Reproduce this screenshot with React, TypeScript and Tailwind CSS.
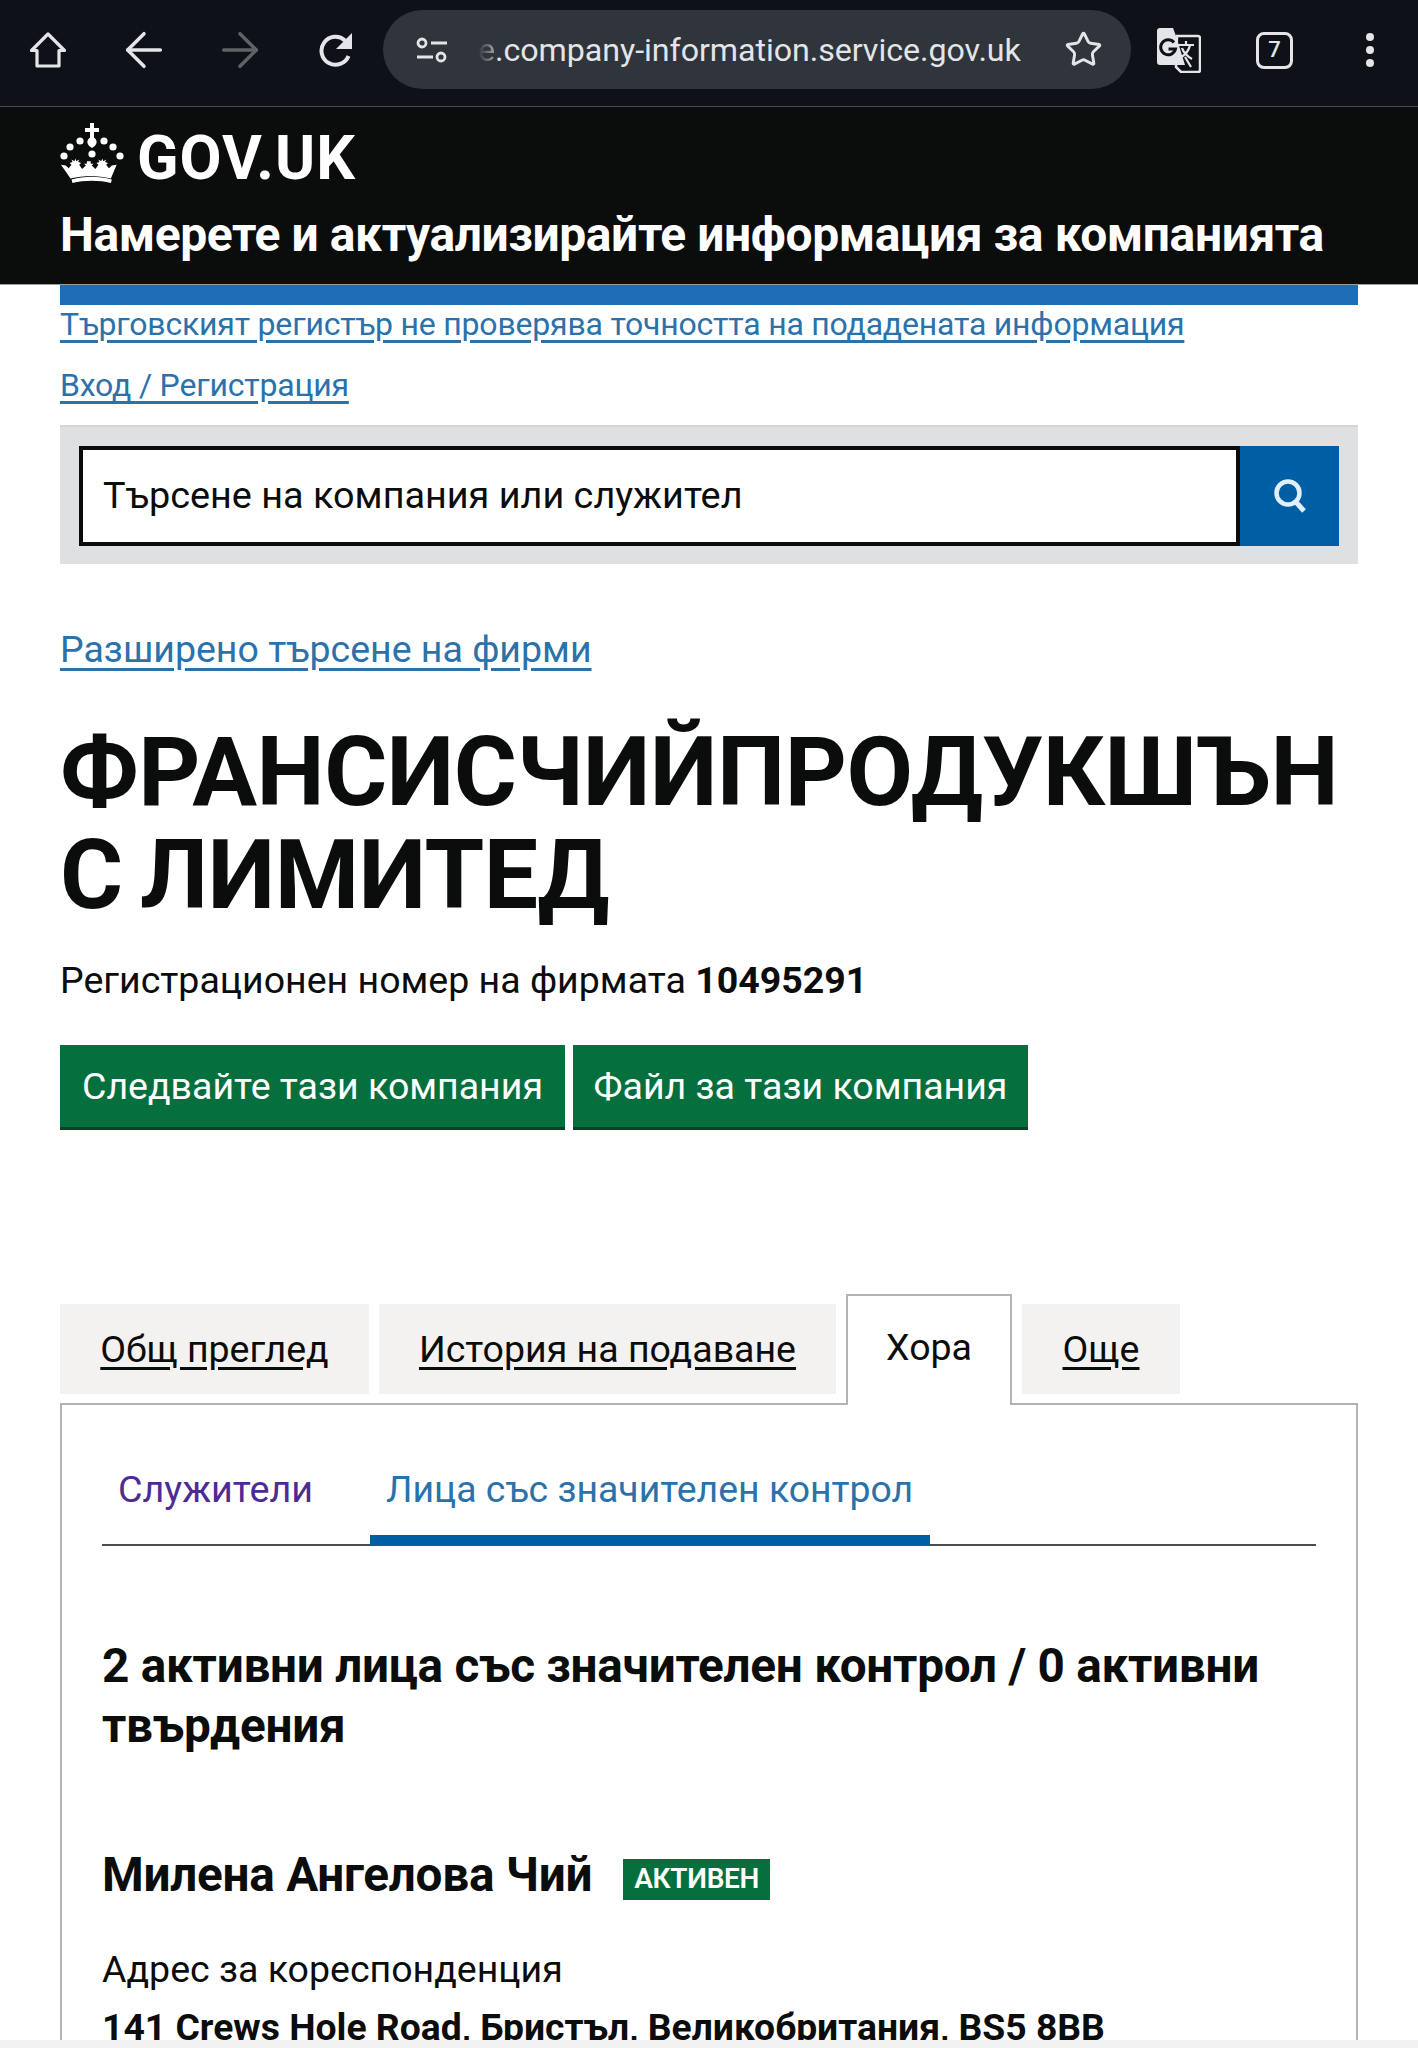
import { ArrowLeft, ArrowRight, Star } from "lucide-react";

const tabs = [
  { label: "Общ преглед", width: "w-[309px]" },
  { label: "История на подаване", width: "w-[457px]" },
];

const Crown = () => (
  <svg width="64" height="62" viewBox="0 0 64 62" fill="#fff" className="shrink-0">
    <path transform="translate(-1 0)" d="M31 0h4v5h5v4h-5v5.500c2 1.500 3 3.500 2.500 5.500-.5 2-2.500 4-4.500 5-2-1-4-3-4.500-5-.5-2 .5-4 2.500-5.500V9h-5V5h5z" />
    <circle cx="20" cy="18" r="3.600" />
    <circle cx="44" cy="18" r="3.600" />
    <circle cx="10" cy="24" r="3.600" />
    <circle cx="53" cy="24" r="3.600" />
    <circle cx="4" cy="33" r="3.600" />
    <circle cx="60" cy="33" r="3.600" />
    <circle cx="32" cy="31" r="3.600" />
    <g transform="translate(0 6) scale(0.96 0.87)">
      <path d="M1 41l5 1 3 3 3-4-2-2 3-1-1-3 3 2 1-3 1 3 3-2-1 3 3 1-2 2 3 5 4-4-2-2h3v-3h4v3h3l-2 2 4 4 3-5-2-2 3-1-1-3 3 2 1-3 1 3 3-2-1 3 3 1-2 2 3 4 3-3 5-1-6 16c-7-2-14-3-21-3s-14 1-21 3z" />
      <path d="M12 58c7-2 14-3 21-3s14 1 21 3l-1 4c-6-1.500-13-2.500-20-2.500S19 60.500 13 62z" />
    </g>
  </svg>
);

const Translate = () => (
  <svg width="44" height="46" viewBox="0 0 44 46">
    <path d="M20 9h21a2 2 0 0 1 2 2v32a2 2 0 0 1-2 2H24l-5-5z" fill="#0e1218" stroke="#e3e5e8" strokeWidth="2.500" />
    <path d="M3 1h13l3 8 9 29H3a3 3 0 0 1-3-3V4a3 3 0 0 1 3-3z" fill="#e3e5e8" />
    <path d="M17 15.500a7.500 7.500 0 1 0 1.500 6.500H11.500" fill="none" stroke="#0e1218" strokeWidth="3" />
    <path d="M21 18h16M29 14v4M33 18c-1 6-5 10-10 13M25 21c1 4 6 9 10 11M28 30l6 10" fill="none" stroke="#e3e5e8" strokeWidth="2.200" />
  </svg>
);

const App = () => {
  return (
    <div className="relative h-[2048px] overflow-hidden bg-white font-['Roboto',sans-serif] text-[#0b0c0c]">
      {/* BROWSER BAR */}
      <div className="flex h-[107px] items-start border-b border-[#454a50] bg-[#0e1218] text-[#e3e5e8]">
        <div className="flex h-[100px] w-[96px] items-center justify-center">
          <svg width="38" height="38" viewBox="0 0 38 38" fill="none" stroke="#e3e5e8" strokeWidth="3.200" strokeLinejoin="round">
            <path d="M19 3 2.500 19.500H8V35h22V19.500h5.500z" />
          </svg>
        </div>
        <div className="flex h-[100px] w-[96px] items-center justify-center">
          <ArrowLeft size={56} strokeWidth={1.500} />
        </div>
        <div className="flex h-[100px] w-[96px] items-center justify-center text-[#5f6368]">
          <ArrowRight size={56} strokeWidth={1.500} />
        </div>
        <div className="flex h-[100px] w-[95px] items-center justify-center">
          <svg width="36" height="36" viewBox="0 0 36 36" fill="none">
            <path d="M30.500 24A14 14 0 1 1 27 8.500" stroke="#e3e5e8" strokeWidth="4" />
            <path d="M34 1v16H18z" fill="#e3e5e8" />
          </svg>
        </div>
        <div className="mt-[10px] flex h-[79px] w-[748px] items-center rounded-full bg-[#30343b]">
          <svg width="32" height="26" viewBox="0 0 32 26" fill="none" stroke="#e3e5e8" strokeWidth="2.800" className="ml-[33px]">
            <circle cx="6" cy="6" r="4" />
            <path d="M15 6h16M1 20h16" />
            <circle cx="25" cy="20" r="4" />
          </svg>
          <div className="ml-[30px] w-[545px] whitespace-nowrap text-[32.200px] leading-[40px] tracking-[-0.05px]">
            <span className="bg-linear-to-r from-[#30343b] to-[#a4a7ac] bg-clip-text text-transparent">e</span>.company-information.service.gov.uk
          </div>
          <Star size={39} strokeWidth={1.800} className="ml-[41px]" />
        </div>
        <div className="flex h-[100px] w-[96px] items-center justify-center">
          <Translate />
        </div>
        <div className="flex h-[100px] w-[95px] items-center justify-center">
          <div className="flex h-[37px] w-[37px] items-center justify-center rounded-[8px] border-[3px] border-[#e3e5e8] text-[22px] font-medium leading-none">
            7
          </div>
        </div>
        <div className="flex h-[100px] w-[96px] flex-col items-center justify-center gap-[5px]">
          <span className="h-[8px] w-[8px] rounded-full bg-[#e3e5e8]" />
          <span className="h-[8px] w-[8px] rounded-full bg-[#e3e5e8]" />
          <span className="h-[8px] w-[8px] rounded-full bg-[#e3e5e8]" />
        </div>
      </div>

      {/* GOV.UK HEADER */}
      <div className="h-[178px] border-b border-[#9a9c9e] bg-[#0b0c0c] pl-[60px] text-white">
        <div className="flex items-start pt-[16px]">
          <Crown />
          <span className="ml-[13px] mt-[2px] text-[61px] font-bold leading-[66px] tracking-[1px]">GOV.UK</span>
        </div>
        <div className="mt-[17px] whitespace-nowrap text-[48px] font-bold leading-[54px] tracking-[-0.42px]">
          Намерете и актуализирайте информация за компанията
        </div>
      </div>

      <div className="mx-[60px]">
        <div className="h-[20px] bg-[#1f6db5]" />

        <div className="text-[32px] leading-[38px] tracking-[-0.2px] text-[#2b72ab] underline underline-offset-[5px]">
          Търговският регистър не проверява точността на подадената информация
        </div>
        <div className="mt-[23px] text-[32px] leading-[38px] tracking-[-0.2px] text-[#2b72ab] underline underline-offset-[5px]">
          Вход / Регистрация
        </div>

        {/* SEARCH */}
        <div className="mt-[21px] flex h-[139px] items-center border-t-2 border-t-[#d3d5d7] bg-[#dee0e2] px-[19px]">
          <div className="flex h-[100px] flex-1 items-center border-[4px] border-[#0b0c0c] bg-white pl-[20px] text-[37.800px]">
            Търсене на компания или служител
          </div>
          <div className="flex h-[100px] w-[99px] items-center justify-center bg-[#005ea5]">
            <svg width="36" height="36" viewBox="0 0 36 36" fill="none" stroke="#dff0fa" strokeWidth="4.500">
              <circle cx="16" cy="15" r="11.500" />
              <path d="m23 23 9 10" strokeWidth="5" />
            </svg>
          </div>
        </div>

        <div className="mt-[62px] text-[37.500px] leading-[46px] text-[#2b72ab] underline underline-offset-[6px]">
          Разширено търсене на фирми
        </div>

        <h1 className="mt-[49px] text-[96.500px] font-bold leading-[103px] tracking-[-0.5px] [word-spacing:-6px]">
          ФРАНСИСЧИЙПРОДУКШЪН<br />С ЛИМИТЕД
        </h1>

        <div className="mt-[31px] text-[37.500px] leading-[44px]">
          Регистрационен номер на фирмата <strong className="font-bold">10495291</strong>
        </div>

        <div className="mt-[43px] flex gap-[8px]">
          <div className="flex h-[85px] w-[505px] items-center justify-center border-b-[3px] border-[#0f3f25] bg-[#066f3e] text-[37.500px] text-white">
            Следвайте тази компания
          </div>
          <div className="flex h-[85px] w-[455px] items-center justify-center border-b-[3px] border-[#0f3f25] bg-[#066f3e] text-[37.500px] text-white">
            Файл за тази компания
          </div>
        </div>

        {/* TABS */}
        <div className="relative z-10 mt-[164px] flex h-[111px] items-end gap-[10px]">
          {tabs.map((tab) => (
            <div key={tab.label} className={`mb-[11px] flex h-[90px] items-center justify-center bg-[#f3f2f1] text-[37.500px] underline underline-offset-[5px] ${tab.width}`}>
              {tab.label}
            </div>
          ))}
          <div className="flex h-[111px] w-[166px] items-start justify-center border-x-2 border-t-2 border-[#b1b4b6] bg-white pt-[27px] text-[37.500px] leading-[48px]">
            Хора
          </div>
          <div className="mb-[11px] flex h-[90px] w-[158px] items-center justify-center bg-[#f3f2f1] text-[37.500px] underline underline-offset-[5px]">
            Още
          </div>
        </div>

        {/* PANEL */}
        <div className="-mt-[2px] border-2 border-[#b1b4b6] px-[40px] pt-[59px]">
          <div className="flex h-[82px] items-start border-b-2 border-[#4a4c4d] leading-[50px]">
            <div className="w-[268px] pl-[16px] text-[37.700px] text-[#4c2c92]">Служители</div>
            <div className="h-[82px] w-[560px] border-b-[11px] border-[#005ea5] pl-[16px] text-[37.400px] text-[#2b72ab]">
              Лица със значителен контрол
            </div>
          </div>

          <h2 className="mt-[90px] text-[47.700px] font-bold leading-[60px] tracking-[-0.25px]">
            2 активни лица със значителен контрол / 0 активни<br />твърдения
          </h2>

          <div className="mt-[89px] flex items-center">
            <span className="text-[47.700px] font-bold leading-[60px] tracking-[-0.25px]">Милена Ангелова Чий</span>
            <span className="ml-[31px] mt-[8px] flex h-[41px] w-[147px] items-center justify-center bg-[#066f3e] text-[28px] font-semibold tracking-[-0.3px] text-white">
              АКТИВЕН
            </span>
          </div>

          <div className="mt-[42px] text-[37.500px] leading-[44px]">Адрес за кореспонденция</div>
          <div className="mt-[14px] text-[37.300px] font-bold leading-[44px]">
            141 Crews Hole Road, Бристъл, Великобритания, BS5 8BB
          </div>
        </div>
      </div>

      {/* bottom strip of the phone screen */}
      <div className="absolute inset-x-0 bottom-0 h-[8px] bg-[#f2f2f2]" />
    </div>
  );
};

export default App;
